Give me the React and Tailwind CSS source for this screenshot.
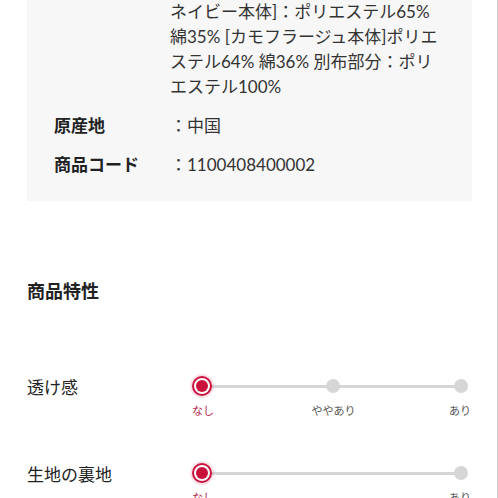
const font = { fontFamily: 'Lato, "Noto Sans CJK JP", sans-serif' };

const specs = [
  {
    label: '',
    lines: [
      'ネイビー本体]：ポリエステル65%',
      '綿35% [カモフラージュ本体]ポリエ',
      'ステル64% 綿36% 別布部分：ポリ',
      'エステル100%',
    ],
  },
  { label: '原産地', lines: ['：中国'] },
  { label: '商品コード', lines: ['：1100408400002'] },
];

const traits = [
  { label: '透け感', steps: ['なし', 'ややあり', 'あり'] },
  { label: '生地の裏地', steps: ['なし', 'あり'] },
];

function Dot({ active }) {
  if (active) {
    return (
      <div className="relative w-[20px] h-[20px] rounded-full border-2 border-[#c8123c] bg-white p-[2px] shadow-[0_0_0_2px_rgba(200,18,60,0.12)]">
        <div className="w-full h-full rounded-full bg-[#c8123c]" />
      </div>
    );
  }
  return <div className="relative w-[14px] h-[14px] rounded-full bg-[#d6d6d6]" />;
}

function Trait({ label, steps }) {
  return (
    <div className="flex items-start">
      <div className="w-[165px] mt-[2px] text-[17px] leading-[20px] text-[#222]">{label}</div>
      <div className="w-[276px]">
        <div className="relative h-[20px] flex items-center justify-between">
          <div className="absolute left-[10px] right-[7px] top-[9px] h-[3px] bg-[#d6d6d6]" />
          {steps.map((s, i) => (
            <Dot key={s} active={i === 0} />
          ))}
        </div>
        <div className="mt-[7px] -mr-[3px] flex justify-between text-[11px] leading-[16px] text-[#555]">
          {steps.map((s, i) => (
            <span key={s} className={i === 0 ? 'text-[#b5284f]' : i === 1 ? 'ml-[4px]' : ''}>
              {s}
            </span>
          ))}
        </div>
      </div>
    </div>
  );
}

export default function App() {
  return (
    <div style={font} className="w-[498px] h-[498px] overflow-hidden bg-white border-r border-[#cfcfcf]">
      <div className="pl-[27px] pr-[25px]">
        <div className="bg-[#f7f7f7] pl-[27px] pb-[24px] -mt-[1px] flex flex-col gap-[14px]">
          {specs.map((r, idx) => (
            <div key={idx} className="flex text-[17px] leading-[25px]">
              <div className="w-[116px] shrink-0 font-bold text-[#222]">{r.label}</div>
              <div className="text-[#333]">
                {r.lines.map((l) => (
                  <div key={l}>{l}</div>
                ))}
              </div>
            </div>
          ))}
        </div>
        <h2 className="mt-[77px] text-[18px] leading-[26px] font-bold text-[#222]">商品特性</h2>
        <div className="mt-[72px] flex flex-col gap-[44px]">
          {traits.map((t) => (
            <Trait key={t.label} {...t} />
          ))}
        </div>
      </div>
    </div>
  );
}
